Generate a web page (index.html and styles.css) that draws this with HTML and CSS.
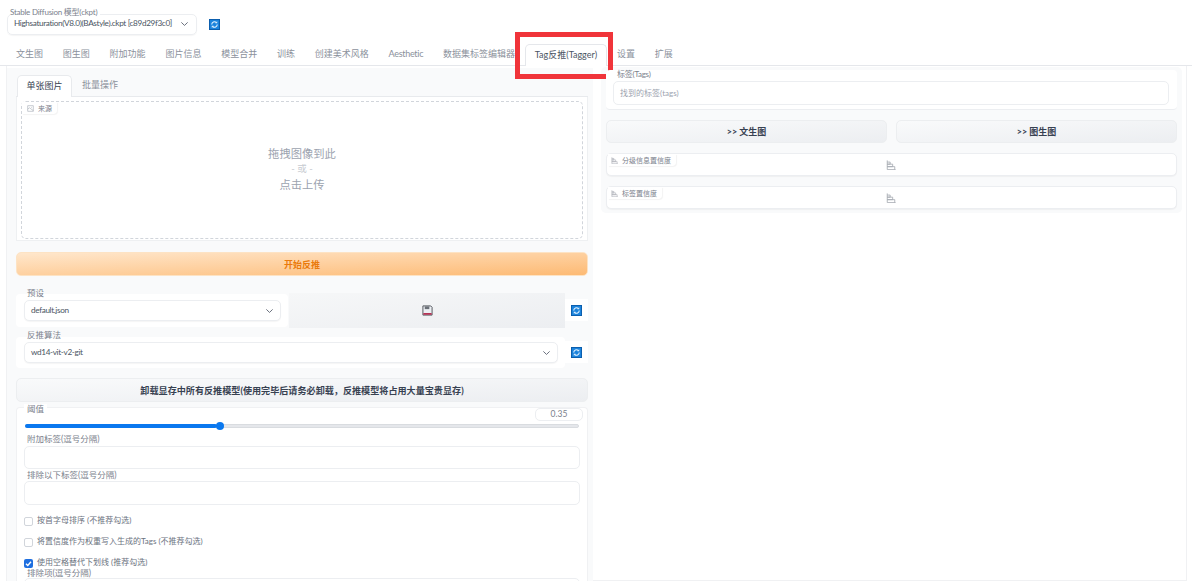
FILE: index.html
```html
<!DOCTYPE html>
<html lang="zh">
<head>
<meta charset="utf-8">
<title>Tagger</title>
<link rel="stylesheet" href="styles.css">
</head>
<body>
<svg class="sprites" width="0" height="0" aria-hidden="true">
  <symbol id="refresh" viewBox="0 0 12 12">
    <rect width="12" height="12" fill="#0b5cab"/>
    <rect x="1" y="1" width="10" height="10" fill="#1b83dc"/>
    <path d="M3 6a3 3 0 0 1 5-2.200M9 6a3 3 0 0 1-5 2.200" fill="none" stroke="#e6f4ff" stroke-width="1.200"/>
    <path d="M9 2.400v2.200H6.800zM3 9.600V7.400h2.200z" fill="#e6f4ff"/>
  </symbol>
  <symbol id="bars" viewBox="0 0 12 12">
    <path d="M1.500 .5v11h10M1.500 2.500h3.500v2.500h-3.500M1.500 5h6.500v3h-6.500M1.500 8h9v3.500" fill="none" stroke="#a5a9b1" stroke-width="1"/>
  </symbol>
  <symbol id="chev" viewBox="0 0 10 6">
    <path d="M1.500 1.200 5 4.600l3.500-3.400" fill="none" stroke="#5b6270" stroke-width="1"/>
  </symbol>
</svg>

<div class="model-row">
  <div class="model-select">
    <span class="legend">Stable Diffusion 模型(ckpt)</span>
    <span class="model-value">Highsaturation(V8.0)(BAstyle).ckpt [c89d29f3c0]</span>
    <svg class="chev"><use href="#chev"/></svg>
  </div>
  <svg class="refresh model-refresh"><use href="#refresh"/></svg>
</div>

<nav class="tabs">
  <span class="tab">文生图</span>
  <span class="tab">图生图</span>
  <span class="tab">附加功能</span>
  <span class="tab">图片信息</span>
  <span class="tab">模型合并</span>
  <span class="tab">训练</span>
  <span class="tab">创建美术风格</span>
  <span class="tab tab-latin">Aesthetic</span>
  <span class="tab">数据集标签编辑器</span>
  <span class="tab tab-active">Tag反推(Tagger)</span>
  <span class="tab">设置</span>
  <span class="tab">扩展</span>
</nav>
<div class="highlight"></div>

<main class="panel">
  <section class="left">
    <div class="subtabs">
      <span class="subtab subtab-active">单张图片</span>
      <span class="subtab">批量操作</span>
    </div>
    <div class="upload-wrap">
      <div class="upload">
        <span class="chip chip-source">
          <svg class="chip-icon" viewBox="0 0 10 10"><path d="M1 1h8v8H1zM1 6l2.500-2 5.500 4M6 3.500h1" fill="none" stroke="#9ca3af" stroke-width=".8"/></svg>来源
        </span>
        <p class="drop-main">拖拽图像到此</p>
        <p class="drop-or">- 或 -</p>
        <p class="drop-main">点击上传</p>
      </div>
    </div>

    <button class="btn btn-primary">开始反推</button>

    <div class="field-row preset-row">
      <div class="card preset-card">
        <span class="field-label">预设</span>
        <div class="select"><span>default.json</span><svg class="chev"><use href="#chev"/></svg></div>
      </div>
      <div class="save">
        <svg class="save-icon" viewBox="0 0 12 12">
          <path d="M1 1h8.500L11 2.500V11H1z" fill="#eceff3" stroke="#4b4f57" stroke-width="1"/>
          <rect x="3" y="1.500" width="5" height="3" fill="#6b7078"/>
          <rect x="1.500" y="8.800" width="9" height="1.800" fill="#b3264a"/>
        </svg>
      </div>
      <div class="refresh-cell"><svg class="refresh"><use href="#refresh"/></svg></div>
    </div>

    <div class="field-row algo-row">
      <div class="card algo-card">
        <span class="field-label">反推算法</span>
        <div class="select"><span>wd14-vit-v2-git</span><svg class="chev"><use href="#chev"/></svg></div>
      </div>
      <div class="refresh-cell"><svg class="refresh"><use href="#refresh"/></svg></div>
    </div>

    <button class="btn btn-secondary btn-unload">卸载显存中所有反推模型(使用完毕后请务必卸载，反推模型将占用大量宝贵显存)</button>

    <div class="options">
      <div class="slider-head">
        <span class="field-label">阈值</span>
        <span class="number">0.35</span>
      </div>
      <div class="slider"><span class="slider-fill"></span><span class="slider-thumb"></span></div>
      <span class="field-label label-tight">附加标签(逗号分隔)</span>
      <div class="textbox"></div>
      <span class="field-label label-tight label-gap">排除以下标签(逗号分隔)</span>
      <div class="textbox textbox-tall"></div>
      <label class="check"><span class="box"></span>按首字母排序 (不推荐勾选)</label>
      <label class="check"><span class="box"></span>将置信度作为权重写入生成的Tags (不推荐勾选)</label>
      <label class="check"><span class="box box-on"><svg viewBox="0 0 10 10"><path d="M2.200 5.200 4.200 7.200 7.800 3" fill="none" stroke="#fff" stroke-width="1.500"/></svg></span>使用空格替代下划线 (推荐勾选)</label>
      <span class="field-label label-last">排除项(逗号分隔)</span>
      <div class="textbox"></div>
    </div>
  </section>

  <section class="right">
    <div class="card tags-card">
      <span class="legend tags-legend">标签(Tags)</span>
      <div class="tags-input">找到的标签(tags)</div>
    </div>
    <div class="send-row">
      <button class="btn btn-secondary">&gt;&gt; 文生图</button>
      <button class="btn btn-secondary">&gt;&gt; 图生图</button>
    </div>
    <div class="result">
      <span class="chip chip-result"><svg class="chip-icon"><use href="#bars"/></svg>分级信息置信度</span>
      <svg class="result-icon"><use href="#bars"/></svg>
    </div>
    <div class="result">
      <span class="chip chip-result"><svg class="chip-icon"><use href="#bars"/></svg>标签置信度</span>
      <svg class="result-icon"><use href="#bars"/></svg>
    </div>
  </section>
</main>
</body>
</html>
```

FILE: styles.css
```css
* { box-sizing: border-box; }
html, body { height: 581px; overflow: hidden; }
body {
  margin: 0;
  position: relative;
  background: #fff;
  color: #6b7280;
  font-family: Lato, "Noto Sans CJK SC", "Noto Sans", sans-serif;
  font-size: 8.5px;
  line-height: 1.2;
}
.sprites { position: absolute; }
p { margin: 0; }

.model-row {
  display: flex;
  align-items: center;
  height: 44px;
  padding: 14px 0 10px 7px;
}
.model-select {
  position: relative;
  display: flex;
  align-items: center;
  justify-content: space-between;
  width: 190px;
  height: 21px;
  padding: 0 7px 0 6px;
  border: 1px solid #eceef1;
  border-radius: 5px;
  box-shadow: 0 1px 1px rgba(0,0,0,.04);
  color: #4b5563;
}
.model-value { white-space: nowrap; font-size: 8.2px; letter-spacing: -.35px; }
.legend {
  position: absolute;
  left: 2px;
  top: -7px;
  padding-right: 3px;
  background: #fff;
  font-size: 8px;
  letter-spacing: -.25px;
  color: #7b818c;
  white-space: nowrap;
}
.chev { width: 9px; height: 6px; flex: none; }
.refresh { display: block; width: 11px; height: 11px; }
.model-refresh { margin-left: 12px; }

.tabs {
  display: flex;
  height: 22px;
  padding-left: 6.1px;
  border-bottom: 1px solid #e5e7eb;
}
.tab {
  display: flex;
  align-items: center;
  padding: 0 9.9px;
  font-size: 9px;
  color: #8b919c;
  white-space: nowrap;
}
.tab-latin { letter-spacing: -.3px; }
.tab-active {
  margin-bottom: -1px;
  padding: 0 9px;
  background: #fff;
  border: 1px solid #e5e7eb;
  border-bottom: 0;
  border-radius: 5px 5px 0 0;
  color: #4b5563;
}

.highlight {
  position: absolute;
  left: 515px;
  top: 32px;
  width: 98px;
  height: 47px;
  border: 5px solid #f0343a;
}

.panel {
  display: flex;
  align-items: flex-start;
  height: 515px;
  margin: 0 5px 0 6px;
  padding: 2px 0 0;
  border: 1px solid #f0f1f3;
  border-top: 0;
  gap: 8px;
}

.left {
  flex: none;
  width: 586px;
  height: 513px;
  padding: 7px 5px 0 9px;
  background: #f9fafb;
}
.subtabs {
  display: flex;
  height: 22px;
  padding-left: 1px;
  border-bottom: 1px solid #e8eaed;
}
.subtab {
  display: flex;
  align-items: center;
  padding: 0 10px;
  font-size: 9px;
  color: #8b919c;
}
.subtab-active {
  height: 22px;
  padding: 0 8.5px;
  background: #fff;
  border: 1px solid #e8eaed;
  border-bottom: 0;
  border-radius: 5px 5px 0 0;
  color: #374151;
}
.upload-wrap {
  height: 144px;
  padding: 4px;
  background: #fff;
  border: 1px solid #eef0f2;
  border-top: 0;
}
.upload {
  position: relative;
  display: flex;
  flex-direction: column;
  align-items: center;
  justify-content: center;
  height: 138px;
  padding-bottom: 3px;
  border: 1px dashed #d1d5db;
  border-radius: 5px;
  background: #fff;
}
.chip {
  position: absolute;
  display: flex;
  align-items: center;
  height: 12px;
  background: #fff;
  border-radius: 0 0 4px 0;
  box-shadow: 1px 1px 1px rgba(0,0,0,.05);
  font-size: 7px;
  color: #7b818c;
  white-space: nowrap;
}
.chip-icon { width: 7px; height: 7px; margin-right: 4px; flex: none; }
.chip-source { left: 0; top: 0; width: 35px; padding-left: 5px; }
.drop-main { font-size: 11.3px; line-height: 15px; color: #9ca3af; }
.drop-or { font-size: 9.5px; line-height: 16px; color: #c7cbd1; }

.btn {
  display: block;
  border: 1px solid #eceef0;
  border-radius: 5px;
  font-family: inherit;
  font-weight: 700;
  font-size: 9px;
  padding: 0;
}
.btn-primary {
  width: 572px;
  height: 24px;
  margin-top: 11px;
  border-color: #fde3c4;
  background: linear-gradient(to bottom right, #ffe7cc, #fdba74);
  color: #ea7a0c;
}
.btn-secondary {
  background: linear-gradient(to bottom right, #f9fafb, #eceef1);
  color: #374151;
}
.btn-unload {
  width: 572px;
  height: 24px;
  margin-top: 10px;
  font-size: 9.1px;
}

.field-row { display: flex; width: 572px; }
.preset-row { height: 35px; margin-top: 17px; }
.algo-row { height: 31px; margin-top: 9px; }
.card {
  position: relative;
  background: #fff;
  border-radius: 4px;
}
.preset-card { width: 272px; height: 33px; margin-top: 1px; padding: 6px 7px 0 8px; }
.algo-card { width: 549px; padding: 5px 7px 0 8px; }
.field-label {
  display: block;
  font-size: 8.5px;
  color: #7b818c;
  white-space: nowrap;
}
.preset-card .field-label { position: absolute; left: 11px; top: -6px; line-height: 11px; }
.algo-card .field-label { position: absolute; left: 11px; top: -7px; line-height: 11px; }
.select {
  display: flex;
  align-items: center;
  justify-content: space-between;
  height: 21px;
  padding: 0 6px;
  background: #fff;
  border: 1px solid #eceef1;
  border-radius: 5px;
  box-shadow: 0 1px 1px rgba(0,0,0,.04);
  font-size: 8.2px;
  letter-spacing: -.35px;
  color: #4b5563;
}
.save {
  display: flex;
  align-items: center;
  justify-content: center;
  width: 276px;
  margin-left: 1px;
  background: linear-gradient(to bottom right, #f6f7f8, #eceef1);
}
.save-icon { width: 11px; height: 11px; }
.refresh-cell {
  display: flex;
  align-items: center;
  justify-content: center;
  flex: 1;
  height: 22px;
  margin-top: 6px;
  background: #fff;
}
.algo-row .refresh-cell { margin-top: 4px; }

.options {
  position: relative;
  width: 572px;
  height: 200px;
  margin-top: 5px;
  padding: 0 7px;
  background: #fff;
  border: 1px solid #f0f1f3;
  border-width: 1px 1px 0;
  border-radius: 4px;
}
.slider-head {
  display: flex;
  justify-content: space-between;
  height: 13px;
}
.slider-head .field-label {
  height: 11px;
  margin: -4px 0 0;
  padding: 0 3px;
  background: #fff;
  line-height: 11px;
}
.number {
  width: 48px;
  height: 13px;
  margin-right: -3px;
  text-align: center;
  line-height: 11px;
  border: 1px solid #eceef1;
  border-radius: 5px;
  background: #fff;
  font-size: 8.5px;
  color: #7b818c;
}
.slider {
  position: relative;
  height: 4px;
  margin: 3px 1px 0;
  background: #e5e7eb;
  border: 1px solid #d9dce0;
  border-radius: 3px;
}
.slider-fill {
  position: absolute;
  left: -1px;
  top: -1px;
  width: 192px;
  height: 4px;
  border-radius: 3px;
  background: #0a78ef;
}
.slider-thumb {
  position: absolute;
  left: 190px;
  top: -3px;
  width: 8px;
  height: 8px;
  border-radius: 50%;
  background: #0a78ef;
}
.label-tight { height: 11px; margin: 6px 0 0 3px; line-height: 11px; }
.label-gap { height: 10px; margin-top: 1px; }
.textbox {
  height: 23px;
  margin-top: 1px;
  background: #fff;
  border: 1px solid #eceef1;
  border-radius: 5px;
}
.textbox-tall { height: 24px; }
.check {
  display: flex;
  align-items: center;
  height: 10px;
  margin-top: 11px;
  font-size: 8px;
  color: #6b7280;
  white-space: nowrap;
}
.box {
  flex: none;
  width: 9px;
  height: 9px;
  margin-right: 4px;
  border: 1px solid #d1d5db;
  border-radius: 2px;
  background: #fff;
}
.box-on { border: 0; background: #1f6fe0; }
.box-on svg { display: block; width: 9px; height: 9px; }
.label-last { height: 9px; margin: 0 0 0 3px; line-height: 10px; }

.right {
  flex: none;
  width: 581px;
  height: 146px;
  margin-top: -1px;
  padding: 3px 5px 0;
  background: #f9fafb;
  border-radius: 5px;
}
.tags-card {
  height: 40px;
  padding: 11px 8px 0 7px;
  border-bottom: 1px solid #eceef1;
}
.tags-legend { left: 10px; top: 0; padding: 0 3px 0 1px; }
.tags-input {
  height: 24px;
  padding: 7px 6px 0;
  border: 1px solid #eceef1;
  border-radius: 5px;
  background: #fff;
  color: #9ca3af;
  font-size: 8px;
}
.send-row {
  display: grid;
  grid-template-columns: 281px 281px;
  gap: 9px;
  margin-top: 10px;
}
.send-row .btn { height: 23px; }
.result {
  position: relative;
  display: flex;
  align-items: center;
  justify-content: center;
  height: 23px;
  margin-top: 10px;
  border: 1px solid #eceef1;
  border-radius: 5px;
  box-shadow: 0 1px 1px rgba(0,0,0,.04);
  background: #fff;
}
.chip-result { left: 1px; top: 0; padding: 0 5px 0 3px; }
.result-icon { width: 10px; height: 10px; margin-left: -1px; }
```
